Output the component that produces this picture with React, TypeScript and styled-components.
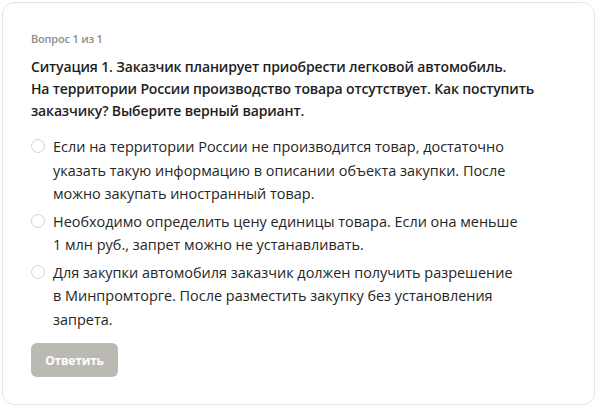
import styled, { createGlobalStyle } from "styled-components";

const GlobalStyle = createGlobalStyle`
  html, body {
    margin: 0;
    padding: 0;
    background: #ffffff;
  }
  body {
    font-family: "Open Sans", "Liberation Sans", sans-serif;
    color: #222222;
  }
`;

const Page = styled.div`
  width: 600px;
  height: 410px;
  padding: 2px 5px 5px 2px;
  box-sizing: border-box;
`;

const Card = styled.section`
  height: 100%;
  box-sizing: border-box;
  border: 1px solid #e4e4e4;
  border-radius: 12px;
  padding: 29px 28px 27px 28px;
  display: flex;
  flex-direction: column;
  align-items: flex-start;
`;

const Counter = styled.div`
  font-size: 11px;
  line-height: 14px;
  font-weight: 600;
  color: #8c8c8c;
  letter-spacing: -0.2px;
`;

const Question = styled.p`
  margin: 10px 0 0 0;
  font-size: 14px;
  line-height: 22px;
  font-weight: 600;
  color: #1e1e1e;
  letter-spacing: -0.15px;
`;

const Options = styled.ul`
  list-style: none;
  margin: 13px 0 0 0;
  padding: 0;
  display: flex;
  flex-direction: column;
  gap: 4px;
`;

const Option = styled.li`
  display: flex;
  align-items: flex-start;
  gap: 8px;
  cursor: pointer;
`;

const Radio = styled.span`
  flex: none;
  width: 14px;
  height: 14px;
  margin-top: 4px;
  border: 1px solid #d4d4d4;
  border-radius: 50%;
  box-sizing: border-box;
  background: #ffffff;
`;

const OptionText = styled.span`
  font-size: 14.45px;
  line-height: 23.5px;
  color: #262626;
`;

const Button = styled.button`
  margin-top: 12px;
  width: 87px;
  height: 35px;
  border: none;
  border-radius: 6px;
  background: #bbb9b3;
  color: #ffffff;
  font-family: "Open Sans", "Liberation Sans", sans-serif;
  font-size: 12px;
  font-weight: 700;
  letter-spacing: -0.2px;
  cursor: default;
`;

const answers = [
  [
    "Если на территории России не производится товар, достаточно",
    "указать такую информацию в описании объекта закупки. После",
    "можно закупать иностранный товар.",
  ],
  [
    "Необходимо определить цену единицы товара. Если она меньше",
    "1 млн руб., запрет можно не устанавливать.",
  ],
  [
    "Для закупки автомобиля заказчик должен получить разрешение",
    "в Минпромторге. После разместить закупку без установления",
    "запрета.",
  ],
];

const App = () => {
  return (
    <>
      <GlobalStyle />
      <Page>
        <Card>
          <Counter>Вопрос 1 из 1</Counter>
          <Question>
            Ситуация 1. Заказчик планирует приобрести легковой автомобиль.
            <br />
            На территории России производство товара отсутствует. Как поступить
            <br />
            заказчику? Выберите верный вариант.
          </Question>
          <Options>
            {answers.map((lines, i) => (
              <Option key={i}>
                <Radio />
                <OptionText>
                  {lines.map((line, j) => (
                    <span key={j}>
                      {line}
                      {j < lines.length - 1 && <br />}
                    </span>
                  ))}
                </OptionText>
              </Option>
            ))}
          </Options>
          <Button disabled>Ответить</Button>
        </Card>
      </Page>
    </>
  );
};

export default App;
